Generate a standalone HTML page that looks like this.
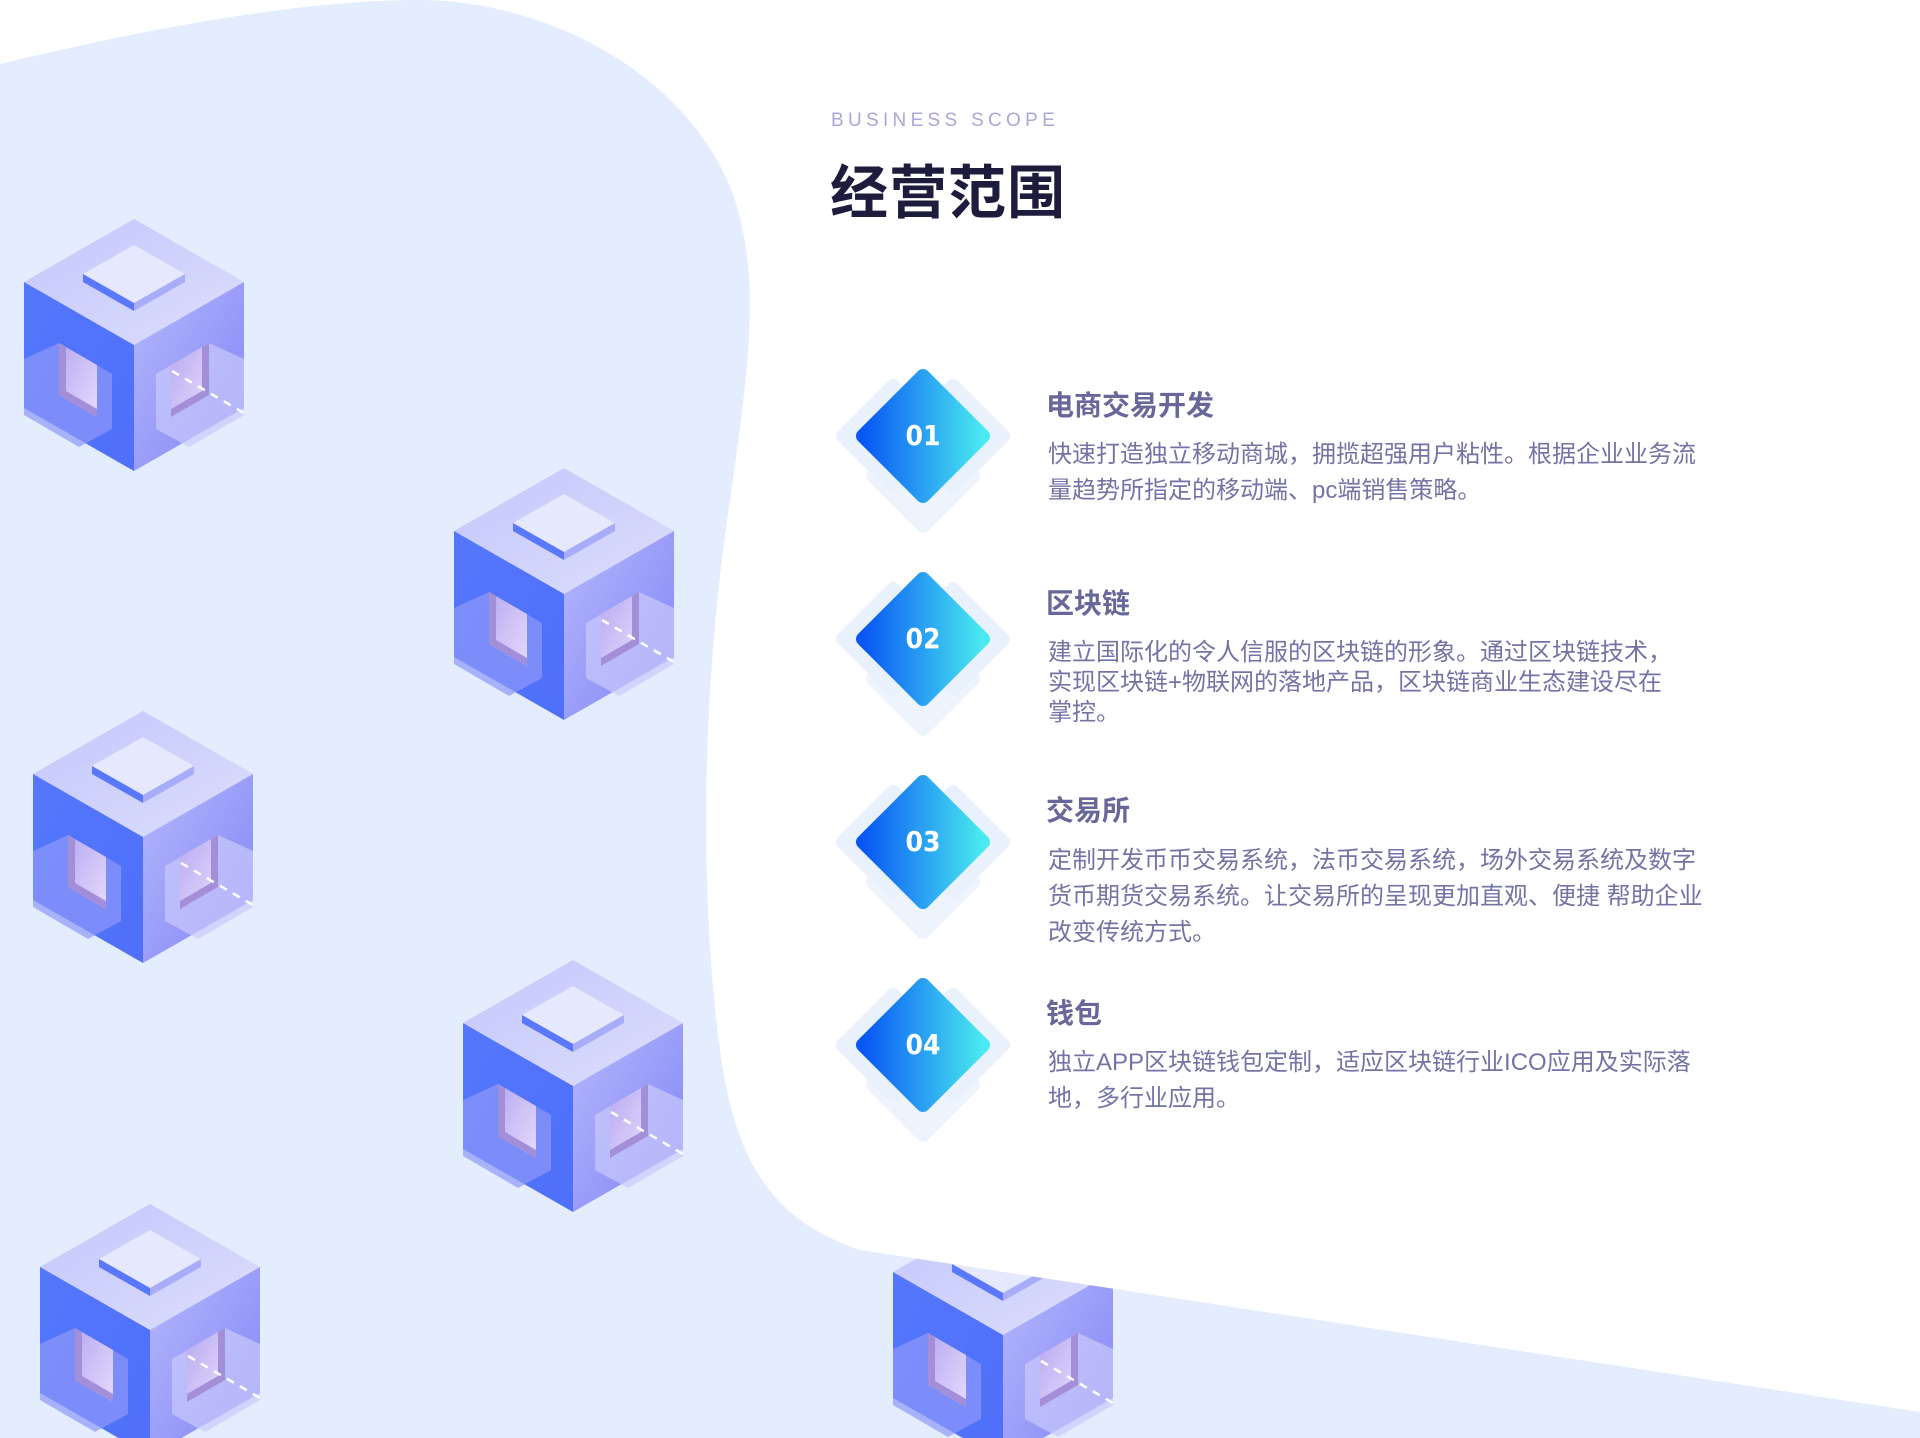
<!DOCTYPE html>
<html><head><meta charset="utf-8"><style>
html,body{margin:0;padding:0}
body{width:1920px;height:1438px;position:relative;overflow:hidden;background:#e3edfd;font-family:"Liberation Sans","Noto Sans CJK SC",sans-serif}
svg.bg{position:absolute;left:0;top:0}
.t{position:absolute}
.sub{left:831px;top:110px;font-size:19px;letter-spacing:4.3px;color:#a9a8d4}
.title{left:830px;top:146px;font-size:58px;font-weight:bold;color:#1e1c3c;letter-spacing:1px}
.h{left:1046px;font-size:28px;font-weight:bold;color:#68679a}
.p{left:1048px;width:656px;font-size:24px;color:#7473a6}
.num{position:absolute;width:80px;text-align:center;font-size:28px;font-weight:bold;color:#fff;font-family:"DejaVu Sans Condensed","Liberation Sans",sans-serif}
</style></head><body>
<svg class="bg" width="1920" height="1438" viewBox="0 0 1920 1438">
<defs>
<linearGradient id="top" x1="0" y1="0" x2="1" y2="1"><stop offset="0" stop-color="#c3c6fb"/><stop offset="1" stop-color="#dcdefd"/></linearGradient>
<linearGradient id="lf" x1="0" y1="0" x2="1" y2="1"><stop offset="0" stop-color="#5477fb"/><stop offset="1" stop-color="#4f6ffa"/></linearGradient>
<linearGradient id="rf" x1="0" y1="0" x2="1" y2="1"><stop offset="0" stop-color="#b5b8fb"/><stop offset="1" stop-color="#8183f6"/></linearGradient>
<linearGradient id="hole" x1="0" y1="0" x2="1" y2="1"><stop offset="0" stop-color="#b8a9f0"/><stop offset="1" stop-color="#e4dafd"/></linearGradient>
<linearGradient id="dg" x1="0" y1="0" x2="1" y2="0"><stop offset="0" stop-color="#0856f4"/><stop offset="1" stop-color="#4aeaf0"/></linearGradient>
<g id="cube">
<polygon points="110,0 220,63 110,126 0,63" fill="url(#top)"/>
<polygon points="0,63 110,126 110,252 0,189" fill="url(#lf)"/>
<polygon points="110,126 220,63 220,189 110,252" fill="url(#rf)"/>
<polygon points="0,140 35,124 88,155 88,210 55,228 0,196" fill="#8f98f9" opacity=".7"/>
<polygon points="35,124 73,146 73,198 35,176" fill="url(#hole)"/>
<polygon points="35,124 42,128 42,172 73,190 73,198 35,176" fill="#a38fd8"/>
<polygon points="220,140 185,124 132,155 132,210 165,228 220,196" fill="#c9c9fc" opacity=".7"/>
<polygon points="185,124 147,146 147,198 185,176" fill="url(#hole)"/>
<polygon points="185,124 178,128 178,172 147,190 147,198 185,176" fill="#a38fd8"/>
<polygon points="110,26 161,55 110,84 59,55" fill="#e6e8fe"/>
<polygon points="59,55 110,84 110,92 59,63" fill="#5a78fb"/>
<polygon points="110,84 161,55 161,63 110,92" fill="#a9acf9"/>
<line x1="148" y1="152" x2="220" y2="194" stroke="#fff" stroke-width="2.5" stroke-dasharray="8,7"/>
</g>
<g id="dia">
<polygon points="-30,-50 20,0 -30,50 -80,0" fill="#e4effc" stroke="#e4effc" stroke-width="14" stroke-linejoin="round" opacity=".8"/>
<polygon points="30,-50 80,0 30,50 -20,0" fill="#e4effc" stroke="#e4effc" stroke-width="14" stroke-linejoin="round" opacity=".8"/>
<polygon points="0,-10 50,40 0,90 -50,40" fill="#eaf2fd" stroke="#eaf2fd" stroke-width="14" stroke-linejoin="round" opacity=".8"/>
<polygon points="0,-60 60,0 0,60 -60,0" fill="url(#dg)" stroke="url(#dg)" stroke-width="14" stroke-linejoin="round"/>
</g>
</defs>
<use href="#cube" x="24" y="219"/>
<use href="#cube" x="454" y="468"/>
<use href="#cube" x="33" y="711"/>
<use href="#cube" x="463" y="960"/>
<use href="#cube" x="40" y="1204"/>
<use href="#cube" x="893" y="1209"/>
<path d="M0,0 L0,64 C150,28 300,0 420,0 C540,0 690,70 735,200 C760,280 750,360 730,500 C700,700 700,900 720,1050 C735,1160 770,1220 860,1250 L1920,1412 L1920,0 Z" fill="#fff"/>
<use href="#dia" x="923" y="436"/>
<use href="#dia" x="923" y="639"/>
<use href="#dia" x="923" y="842"/>
<use href="#dia" x="923" y="1045"/>
</svg>
<div class="num" style="left:883px;top:419px">01</div>
<div class="num" style="left:883px;top:622px">02</div>
<div class="num" style="left:883px;top:825px">03</div>
<div class="num" style="left:883px;top:1028px">04</div>
<div class="t sub">BUSINESS SCOPE</div>
<div class="t title">经营范围</div>
<div class="t h" style="top:384px">电商交易开发</div>
<div class="t p" style="top:437px;line-height:36px">快速打造独立移动商城，拥揽超强用户粘性。根据企业业务流量趋势所指定的移动端、pc端销售策略。</div>
<div class="t h" style="top:582px">区块链</div>
<div class="t p" style="top:638px;line-height:30px">建立国际化的令人信服的区块链的形象。通过区块链技术，<br>实现区块链+物联网的落地产品，区块链商业生态建设尽在<br>掌控。</div>
<div class="t h" style="top:789px">交易所</div>
<div class="t p" style="top:843px;line-height:36px">定制开发币币交易系统，法币交易系统，场外交易系统及数字货币期货交易系统。让交易所的呈现更加直观、便捷 帮助企业改变传统方式。</div>
<div class="t h" style="top:992px">钱包</div>
<div class="t p" style="top:1045px;line-height:36px">独立APP区块链钱包定制，适应区块链行业ICO应用及实际落地，多行业应用。</div>
</body></html>
